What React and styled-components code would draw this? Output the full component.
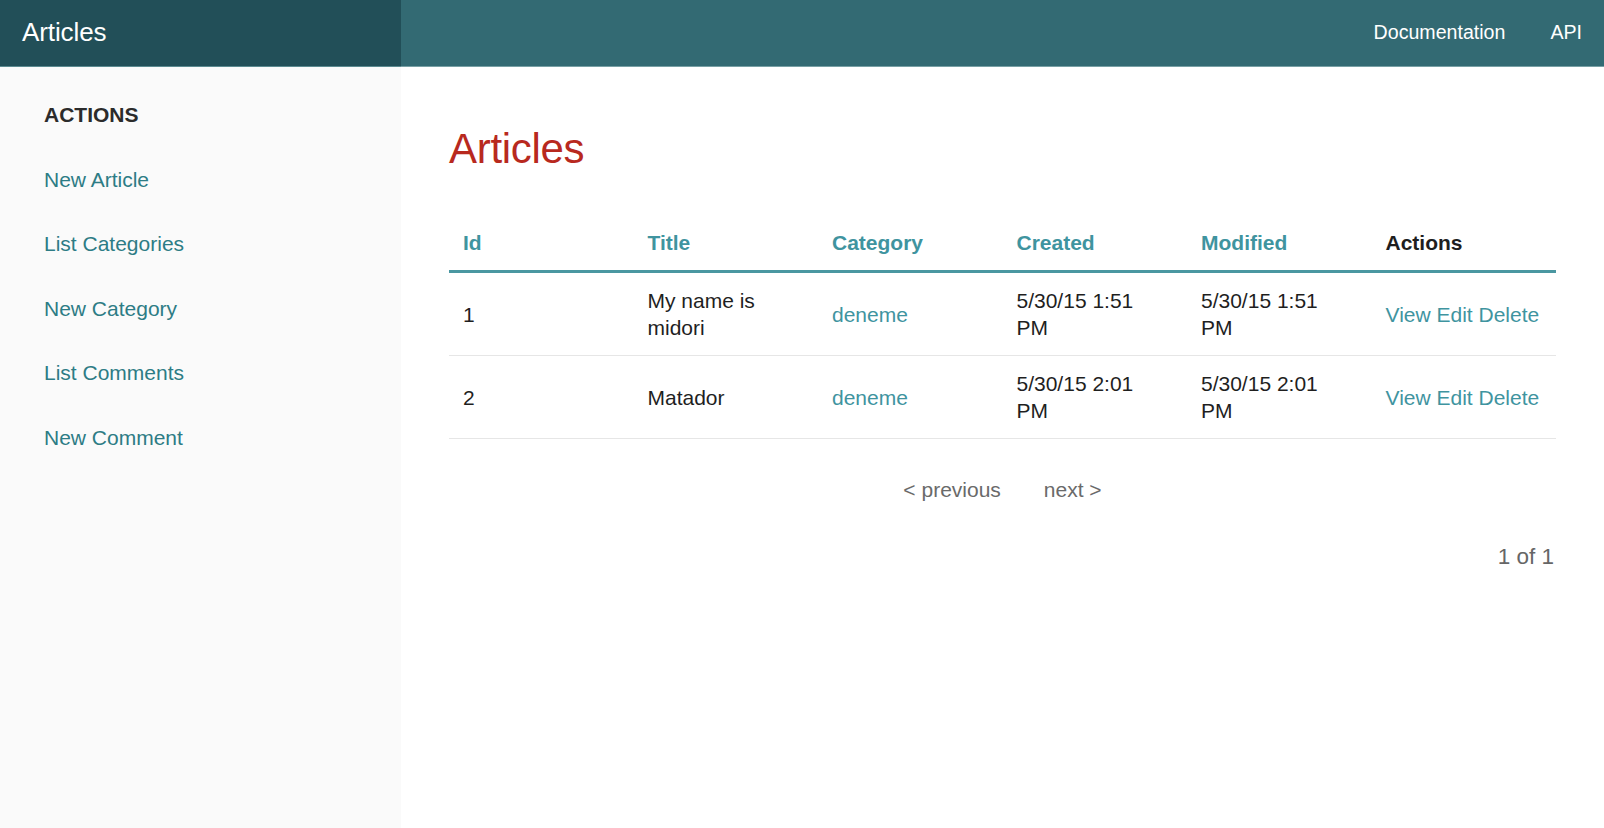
import React from "react";
import styled, { createGlobalStyle } from "styled-components";

const Global = createGlobalStyle`
  html, body { margin: 0; padding: 0; }
  body {
    font-family: "Liberation Sans", Arial, Helvetica, sans-serif;
    background: #ffffff;
    color: #222222;
  }
  * { box-sizing: border-box; }
`;

const Page = styled.div`
  display: grid;
  grid-template-rows: 67px 1fr;
  min-height: 828px;
`;

const TopBar = styled.header`
  display: grid;
  grid-template-columns: 401px 1fr;
  height: 67px;
`;

const Brand = styled.div`
  display: flex;
  align-items: center;
  padding: 0 0 1px 22px;
  background: #224f58;
  border-bottom: 1px solid #5b8a90;
  color: #ffffff;
  font-size: 26px;
  letter-spacing: -0.1px;
`;

const TopNav = styled.nav`
  display: flex;
  align-items: center;
  justify-content: flex-end;
  gap: 45px;
  padding: 0 22px 1px 0;
  background: #336a73;
  border-bottom: 1px solid #78a0a5;
`;

const TopLink = styled.a`
  color: #ffffff;
  font-size: 19.6px;
  text-decoration: none;
`;

const Body = styled.div`
  display: grid;
  grid-template-columns: 401px 1fr;
`;

const Sidebar = styled.aside`
  background: #fafafa;
  padding: 34px 0 0 44px;
  display: flex;
  flex-direction: column;
  gap: 37.5px;
`;

const SideHeading = styled.div`
  font-size: 21px;
  line-height: 27px;
  font-weight: bold;
  color: #2b2b2b;
  text-transform: uppercase;
`;

const SideLink = styled.a`
  font-size: 21px;
  line-height: 27px;
  color: #2d7c85;
  text-decoration: none;
`;

const Main = styled.main`
  padding: 57px 48px 0 48px;
`;

const Title = styled.h3`
  margin: 0 0 42px 0;
  font-size: 42px;
  line-height: 49px;
  font-weight: normal;
  color: #b8291e;
  letter-spacing: -0.3px;
`;

const Table = styled.table`
  width: 100%;
  table-layout: fixed;
  border-collapse: collapse;
  font-size: 21px;
  line-height: 27px;
`;

const Th = styled.th`
  text-align: left;
  font-weight: bold;
  padding: 14px 20px 14px 14px;
  border-bottom: 3px solid #4a97a1;
  color: ${(p) => (p.$plain ? "#1e1e1e" : "#3f949f")};
`;

const Td = styled.td`
  padding: 14px 20px 14px 14px;
  border-bottom: 1px solid #e6e6e6;
  color: #1f1f1f;
  vertical-align: middle;
  white-space: ${(p) => (p.$nowrap ? "nowrap" : "normal")};
`;

const CellLink = styled.a`
  color: #3f949f;
  text-decoration: none;
`;

const Pager = styled.div`
  display: flex;
  justify-content: center;
  gap: 43px;
  margin-top: 37px;
  font-size: 21px;
  line-height: 27px;
`;

const PagerLink = styled.span`
  color: #6a6a6a;
`;

const Counter = styled.p`
  margin: 40px 0 0 0;
  padding-right: 2px;
  text-align: right;
  font-size: 22.5px;
  line-height: 28px;
  color: #666666;
`;

const rows = [
  { id: 1, title: "My name is midori", category: "deneme", created: "5/30/15 1:51 PM", modified: "5/30/15 1:51 PM" },
  { id: 2, title: "Matador", category: "deneme", created: "5/30/15 2:01 PM", modified: "5/30/15 2:01 PM" },
];

export default function App() {
  return (
    <>
      <Global />
      <Page>
        <TopBar>
          <Brand>Articles</Brand>
          <TopNav>
            <TopLink href="#">Documentation</TopLink>
            <TopLink href="#">API</TopLink>
          </TopNav>
        </TopBar>
        <Body>
          <Sidebar>
            <SideHeading>Actions</SideHeading>
            <SideLink href="#">New Article</SideLink>
            <SideLink href="#">List Categories</SideLink>
            <SideLink href="#">New Category</SideLink>
            <SideLink href="#">List Comments</SideLink>
            <SideLink href="#">New Comment</SideLink>
          </Sidebar>
          <Main>
            <Title>Articles</Title>
            <Table>
              <thead>
                <tr>
                  <Th>Id</Th>
                  <Th>Title</Th>
                  <Th>Category</Th>
                  <Th>Created</Th>
                  <Th>Modified</Th>
                  <Th $plain>Actions</Th>
                </tr>
              </thead>
              <tbody>
                {rows.map((r) => (
                  <tr key={r.id}>
                    <Td>{r.id}</Td>
                    <Td>{r.title}</Td>
                    <Td>
                      <CellLink href="#">{r.category}</CellLink>
                    </Td>
                    <Td>{r.created}</Td>
                    <Td>{r.modified}</Td>
                    <Td $nowrap>
                      <CellLink href="#">View</CellLink>{" "}
                      <CellLink href="#">Edit</CellLink>{" "}
                      <CellLink href="#">Delete</CellLink>
                    </Td>
                  </tr>
                ))}
              </tbody>
            </Table>
            <Pager>
              <PagerLink>&lt; previous</PagerLink>
              <PagerLink>next &gt;</PagerLink>
            </Pager>
            <Counter>1 of 1</Counter>
          </Main>
        </Body>
      </Page>
    </>
  );
}
